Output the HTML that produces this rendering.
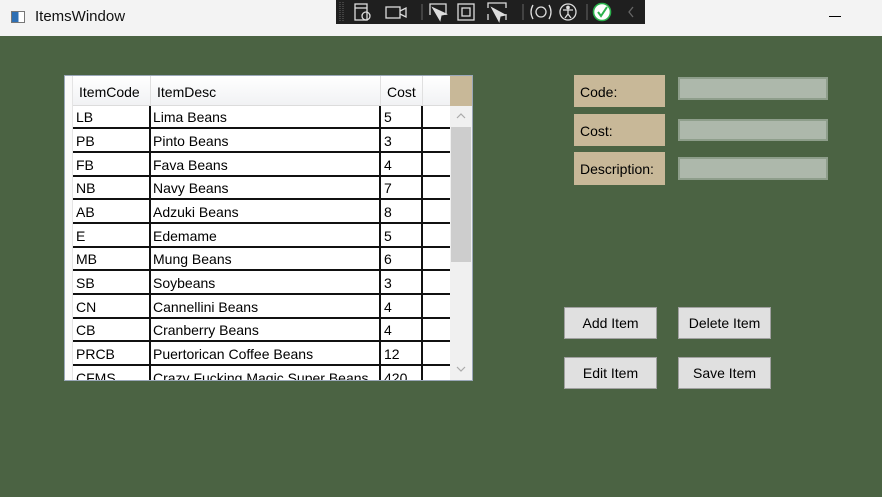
<!DOCTYPE html>
<html><head><meta charset="utf-8"><style>
*{margin:0;padding:0;box-sizing:border-box}
body{width:882px;height:497px;overflow:hidden;background:#4b6343;font-family:"Segoe UI","Liberation Sans",sans-serif;font-size:14px;color:#000;position:relative}
.abs{position:absolute}
#title{left:0;top:0;width:882px;height:36px;background:#f3f3f3}
#tb{left:336px;top:0;width:309px;height:24px;background:#1f1f1f}
.grid{left:64px;top:75px;width:409px;height:306px;background:#fff;border:1px solid #9aa7b8;overflow:hidden}
.hdr{position:absolute;top:0;height:30px;background:linear-gradient(#fff,#f1f2f4);border-right:1px solid #e0e0e0;border-bottom:1px solid #dcdcdc;padding:8px 0 0 6px;font-size:14px}
.row{position:absolute;left:8px;width:377px;height:24px;border-bottom:2px solid #111}
.c{position:absolute;top:4px;font-size:14px}
.vl{position:absolute;top:30px;width:2px;height:280px;background:#111}
.lbl{background:#c8b898;left:574px;width:91px;padding-left:6px;font-size:14px}
.tx{background:#adb8ab;border:2px solid #8e9e8b;left:678px;width:150px}
.btn{background:#e0e0e0;border:1px solid #a0a0a0;width:93px;height:32px;text-align:center;line-height:31px;font-size:14px}
</style></head><body>
<div class="abs" id="title">
 <div class="abs" style="left:11px;top:11px;width:14px;height:12px;border:1px solid #777;background:linear-gradient(90deg,#2d6fb4 0 55%,#fff 55%)"></div>
 <div class="abs" style="left:35px;top:8px;font-size:15px;color:#111">ItemsWindow</div>
 <div class="abs" style="left:829px;top:16px;width:12px;height:1px;background:#000"></div>
</div>
<div class="abs" id="tb">
 <svg width="309" height="24" style="position:absolute;left:0;top:0" fill="none" stroke="#ddd" stroke-width="1.3">
  <g stroke="#555" stroke-dasharray="1 1"><line x1="4" y1="2" x2="4" y2="22"/><line x1="7" y1="2" x2="7" y2="22"/></g>
  <rect x="19" y="4" width="12" height="16"/><line x1="19" y1="8" x2="31" y2="8"/><circle cx="30" cy="16" r="4"/>
  <rect x="50" y="7" width="14" height="11"/><path d="M64 11 L70 8 V17 L64 14"/>
  <line x1="86" y1="4" x2="86" y2="20" stroke="#555"/>
  <path d="M94 15 V4 H110 V15"/><path d="M97 8 L104 20 L105 15 L110 14 Z" fill="#ddd"/>
  <rect x="122" y="4" width="16" height="16"/><rect x="126" y="8" width="8" height="8"/>
  <path d="M152 8 V3 H170 V8 M152 14 V20 M170 14 V20"/><path d="M156 8 L163 21 L164 16 L169 15 Z" fill="#ddd"/>
  <line x1="187" y1="4" x2="187" y2="20" stroke="#555"/>
  <path d="M197 5 Q193 12 197 19 M213 5 Q217 12 213 19"/><circle cx="205" cy="12" r="5"/>
  <circle cx="232" cy="12" r="8"/><circle cx="232" cy="7.5" r="1.2" fill="#ddd"/><path d="M227 10 H237 M232 10 V14 L229 18 M232 14 L235 18"/>
  <line x1="251" y1="4" x2="251" y2="20" stroke="#555"/>
  <circle cx="266" cy="12" r="8.5" fill="#fff" stroke="#2bb24c" stroke-width="1.6"/><path d="M262 12 L265 16 L271 7" stroke="#2bb24c" stroke-width="2"/>
  <path d="M297 7 L293 12 L297 17" stroke="#666"/>
 </svg>
</div>

<div class="abs grid">
 <div class="hdr" style="left:8px;width:78px;padding-left:6px">ItemCode</div>
 <div class="hdr" style="left:86px;width:230px">ItemDesc</div>
 <div class="hdr" style="left:316px;width:42px">Cost</div>
 <div class="hdr" style="left:358px;width:28px;padding:0"></div>
 <div style="position:absolute;left:0;top:0;width:8px;height:310px;background:#fafafa;border-right:1px solid #e4e4e4"></div>
 <div style="position:absolute;left:385px;top:0;width:22px;height:30px;background:#c8b898"></div>
 <div style="position:absolute;left:385px;top:30px;width:22px;height:280px;background:#f0f0f0"></div>
 <div style="position:absolute;left:386px;top:51px;width:20px;height:135px;background:#cdcdcd"></div>
 <svg style="position:absolute;left:390px;top:36px" width="12" height="8" fill="none" stroke="#aaa" stroke-width="1.2"><path d="M2 6 L6 2 L10 6"/></svg>
 <svg style="position:absolute;left:390px;top:289px" width="12" height="8" fill="none" stroke="#aaa" stroke-width="1.2"><path d="M2 2 L6 6 L10 2"/></svg>
 <div class="vl" style="left:84px"></div>
 <div class="vl" style="left:314px"></div>
 <div class="vl" style="left:356px"></div>
</div>

<div class="abs lbl" style="top:75px;height:32px;line-height:34px">Code:</div>
<div class="abs lbl" style="top:114px;height:32px;line-height:34px">Cost:</div>
<div class="abs lbl" style="top:152px;height:33px;line-height:35px">Description:</div>
<div class="abs tx" style="top:77px;height:23px"></div>
<div class="abs tx" style="top:119px;height:22px"></div>
<div class="abs tx" style="top:157px;height:23px"></div>

<div class="abs btn" style="left:564px;top:307px">Add Item</div>
<div class="abs btn" style="left:678px;top:307px">Delete Item</div>
<div class="abs btn" style="left:564px;top:357px">Edit Item</div>
<div class="abs btn" style="left:678px;top:357px">Save Item</div>

<div class="abs" style="left:65px;top:76px;width:385px;height:304px;overflow:hidden">
 <div class="row" style="top:29px"><span class="c" style="left:3px">LB</span><span class="c" style="left:80px">Lima Beans</span><span class="c" style="left:311px">5</span></div>
 <div class="row" style="top:53px"><span class="c" style="left:3px">PB</span><span class="c" style="left:80px">Pinto Beans</span><span class="c" style="left:311px">3</span></div>
 <div class="row" style="top:77px"><span class="c" style="left:3px">FB</span><span class="c" style="left:80px">Fava Beans</span><span class="c" style="left:311px">4</span></div>
 <div class="row" style="top:100px"><span class="c" style="left:3px">NB</span><span class="c" style="left:80px">Navy Beans</span><span class="c" style="left:311px">7</span></div>
 <div class="row" style="top:124px"><span class="c" style="left:3px">AB</span><span class="c" style="left:80px">Adzuki Beans</span><span class="c" style="left:311px">8</span></div>
 <div class="row" style="top:148px"><span class="c" style="left:3px">E</span><span class="c" style="left:80px">Edemame</span><span class="c" style="left:311px">5</span></div>
 <div class="row" style="top:171px"><span class="c" style="left:3px">MB</span><span class="c" style="left:80px">Mung Beans</span><span class="c" style="left:311px">6</span></div>
 <div class="row" style="top:195px"><span class="c" style="left:3px">SB</span><span class="c" style="left:80px">Soybeans</span><span class="c" style="left:311px">3</span></div>
 <div class="row" style="top:219px"><span class="c" style="left:3px">CN</span><span class="c" style="left:80px">Cannellini Beans</span><span class="c" style="left:311px">4</span></div>
 <div class="row" style="top:242px"><span class="c" style="left:3px">CB</span><span class="c" style="left:80px">Cranberry Beans</span><span class="c" style="left:311px">4</span></div>
 <div class="row" style="top:266px"><span class="c" style="left:3px">PRCB</span><span class="c" style="left:80px">Puertorican Coffee Beans</span><span class="c" style="left:311px">12</span></div>
 <div class="row" style="top:290px"><span class="c" style="left:3px">CFMS</span><span class="c" style="left:80px;white-space:nowrap">Crazy Fucking Magic Super Beans</span><span class="c" style="left:311px">420</span></div>
</div>
</body></html>
